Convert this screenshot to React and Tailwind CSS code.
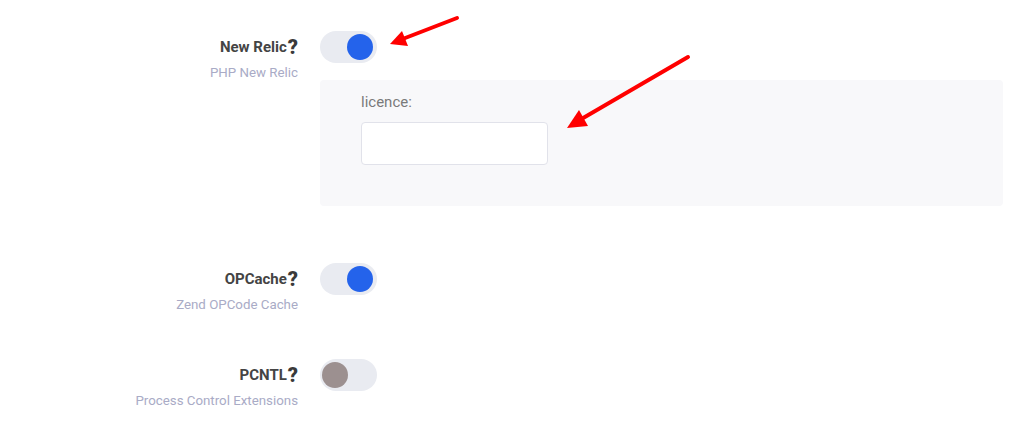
import React from 'react';

const Toggle = ({ on }) => (
  <div className="w-[57px] h-[32px] rounded-full bg-[#e9ebf1] flex items-center px-[3px]">
    <div
      className={`w-[26px] h-[26px] rounded-full ${
        on ? 'bg-[#2463eb] ml-auto mr-[1px]' : 'bg-[#9c9090] ml-[-1px]'
      }`}
    />
  </div>
);

const Row = ({ title, subtitle, on, children, className }) => (
  <div className={`flex ${className}`}>
    <div className="w-[298px] flex flex-col items-end">
      <div className="h-[32px] flex items-center text-[15px] font-bold text-[#444]">
        {title}
        <span className="text-[20px] font-black text-[#3a3a3a] ml-[1px] leading-none">?</span>
      </div>
      <div className="text-[13.3px] leading-[16px] mt-[2px] text-[#a9abc6]">{subtitle}</div>
    </div>
    <div className="ml-[22px] flex-1">
      <Toggle on={on} />
      {children}
    </div>
  </div>
);

const Arrows = () => (
  <svg className="absolute inset-0 pointer-events-none" width="1024" height="421">
    <line x1="457" y1="18" x2="400" y2="40" stroke="#ff0000" strokeWidth="4" strokeLinecap="round" />
    <polygon points="390,44 402,31 408,46" fill="#ff0000" />
    <line x1="688" y1="57" x2="578" y2="121" stroke="#ff0000" strokeWidth="4" strokeLinecap="round" />
    <polygon points="567,128 579,110 588,126" fill="#ff0000" />
  </svg>
);

export default function App() {
  return (
    <div className="relative w-[1024px] h-[421px] bg-white overflow-hidden" style={{ fontFamily: 'Roboto, "Liberation Sans", sans-serif' }}>
      <div className="pt-[31px]">
        <Row title="New Relic" subtitle="PHP New Relic" on>
          <div className="mt-[17px] w-[683px] h-[126px] bg-[#f8f8fa] rounded-[4px] pl-[41px] pt-[13px]">
            <div className="text-[15px] leading-[18px] text-[#7a7a7a]">licence:</div>
            <div className="mt-[11px] w-[187px] h-[43px] bg-white border border-[#e1e2ea] rounded-[4px]" />
          </div>
        </Row>
        <Row title="OPCache" subtitle="Zend OPCode Cache" on className="mt-[57px]" />
        <Row title="PCNTL" subtitle="Process Control Extensions" on={false} className="mt-[46px]" />
      </div>
      <Arrows />
    </div>
  );
}
